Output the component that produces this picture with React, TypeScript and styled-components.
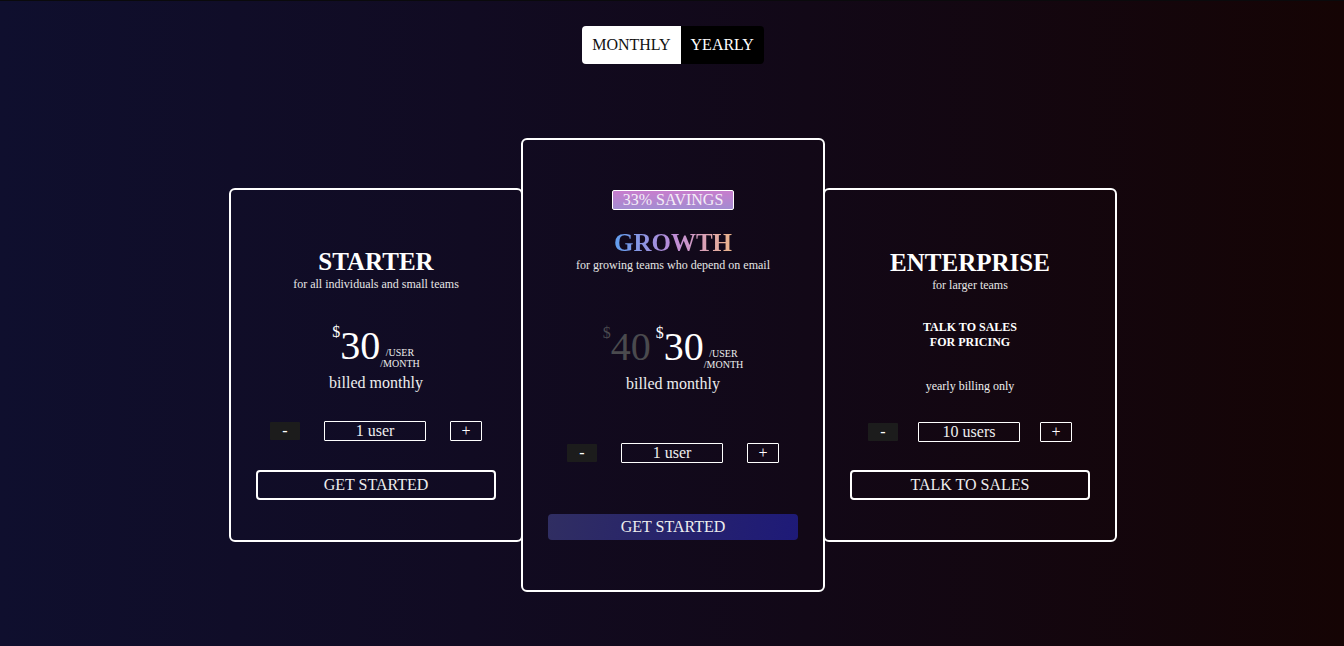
import React, { useState } from "react";
import styled, { createGlobalStyle } from "styled-components";

type Billing = "monthly" | "yearly";

const GlobalStyle = createGlobalStyle`
  html, body {
    margin: 0;
    padding: 0;
    height: 100%;
  }
  body {
    font-family: "Liberation Serif", "Times New Roman", serif;
    color: #fff;
    background: #0c0c1c;
  }
  #root {
    min-height: 100%;
  }
`;

export default function App() {
  const [billing, setBilling] = useState<Billing>("monthly");
  const [starterUsers, setStarterUsers] = useState(1);
  const [growthUsers, setGrowthUsers] = useState(1);
  const [entUsers, setEntUsers] = useState(10);

  const label = (n: number) => `${n} ${n === 1 ? "user" : "users"}`;

  return (
    <Page>
      <GlobalStyle />
      <Toggle>
        <ToggleBtn $active={billing === "monthly"} $side="left" onClick={() => setBilling("monthly")}>
          MONTHLY
        </ToggleBtn>
        <ToggleBtn $active={billing === "yearly"} $side="right" onClick={() => setBilling("yearly")}>
          YEARLY
        </ToggleBtn>
      </Toggle>

      <Cards>
        {/* starter */}
        <Card $pt={57} $pb={40}>
          <Title>STARTER</Title>
          <Sub>for all individuals and small teams</Sub>
          <PriceRow $mt={32}>
            <Dollar>$</Dollar>
            <Amount>30</Amount>
            <Per>
              <span>/USER</span>
              <span>/MONTH</span>
            </Per>
          </PriceRow>
          <Billed>billed monthly</Billed>
          <Qty $mt={29} $gap={24}>
            <Minus onClick={() => setStarterUsers((n) => Math.max(1, n - 1))}>-</Minus>
            <QtyBox>{label(starterUsers)}</QtyBox>
            <Plus onClick={() => setStarterUsers((n) => n + 1)}>+</Plus>
          </Qty>
          <Outline $mt={29}>GET STARTED</Outline>
        </Card>

        {/* growth */}
        <Card $featured $pt={50} $pb={50}>
          <Badge>33% SAVINGS</Badge>
          <GradTitle>GROWTH</GradTitle>
          <Sub>for growing teams who depend on email</Sub>
          <PriceRow $mt={52}>
            <Dollar $muted>$</Dollar>
            <Amount $muted>40</Amount>
            <Dollar>$</Dollar>
            <Amount>30</Amount>
            <Per>
              <span>/USER</span>
              <span>/MONTH</span>
            </Per>
          </PriceRow>
          <Billed>billed monthly</Billed>
          <Qty $mt={50} $gap={24}>
            <Minus onClick={() => setGrowthUsers((n) => Math.max(1, n - 1))}>-</Minus>
            <QtyBox>{label(growthUsers)}</QtyBox>
            <Plus onClick={() => setGrowthUsers((n) => n + 1)}>+</Plus>
          </Qty>
          <Filled>GET STARTED</Filled>
        </Card>

        {/* enterprise */}
        <Card $pt={58} $pb={40}>
          <Title>ENTERPRISE</Title>
          <Sub>for larger teams</Sub>
          <SalesNote>
            TALK TO SALES
            <br />
            FOR PRICING
          </SalesNote>
          <Small>yearly billing only</Small>
          <Qty $mt={29} $gap={20}>
            <Minus onClick={() => setEntUsers((n) => Math.max(10, n - 1))}>-</Minus>
            <QtyBox>{label(entUsers)}</QtyBox>
            <Plus onClick={() => setEntUsers((n) => n + 1)}>+</Plus>
          </Qty>
          <Outline $mt={28}>TALK TO SALES</Outline>
        </Card>
      </Cards>
    </Page>
  );
}

const Page = styled.div`
  min-height: 646px;
  box-sizing: border-box;
  border-top: 1px solid #0a0a0c;
  background: linear-gradient(to right, #0f0f2e 0%, #110b22 35%, #120817 60%, #150404 100%);
  display: flex;
  flex-direction: column;
  align-items: center;
  padding-top: 25px;
`;

const Toggle = styled.div`
  display: flex;
  height: 38px;
  padding-left: 2px;
`;

const ToggleBtn = styled.button<{ $active: boolean; $side: "left" | "right" }>`
  font-family: inherit;
  font-size: 16px;
  border: none;
  padding: 0 10px;
  cursor: pointer;
  background: ${(p) => (p.$active ? "#fff" : "#000")};
  color: ${(p) => (p.$active ? "#111" : "#fff")};
  border-radius: ${(p) => (p.$side === "left" ? "4px 0 0 4px" : "0 4px 4px 0")};
`;

const Cards = styled.div`
  margin-top: 74px;
  padding-left: 2px;
  display: flex;
  align-items: center;
`;

const Card = styled.div<{ $featured?: boolean; $pt: number; $pb: number }>`
  box-sizing: border-box;
  width: ${(p) => (p.$featured ? 304 : 294)}px;
  margin: 0 -1px;
  border: 2px solid #fff;
  border-radius: 6px;
  padding: ${(p) => p.$pt}px 0 ${(p) => p.$pb}px;
  display: flex;
  flex-direction: column;
  align-items: center;
  position: relative;
  z-index: ${(p) => (p.$featured ? 1 : 0)};
`;

const Title = styled.div`
  font-size: 25px;
  font-weight: 700;
  line-height: 30px;
`;

const GradTitle = styled(Title)`
  margin-top: 18px;
  background: linear-gradient(90deg, #5f9ef0 0%, #8e95e2 25%, #bd8bd8 50%, #d9a0b9 75%, #ebb48a 100%);
  -webkit-background-clip: text;
  background-clip: text;
  color: transparent;
`;

const Sub = styled.div`
  font-size: 12px;
  line-height: 14px;
  color: #e6e6e6;
`;

const Badge = styled.div`
  box-sizing: border-box;
  height: 20px;
  width: 122px;
  border: 1px solid #fff;
  border-radius: 2px;
  background: linear-gradient(#c77dcd, #a38cd1);
  font-size: 16px;
  line-height: 18px;
  text-align: center;
  color: #f4eef8;
`;

const PriceRow = styled.div<{ $mt: number }>`
  margin-top: ${(p) => p.$mt}px;
  height: 46px;
  display: flex;
  align-items: flex-start;
`;

const Dollar = styled.span<{ $muted?: boolean }>`
  font-size: 16px;
  line-height: 16px;
  margin-top: 1px;
  color: ${(p) => (p.$muted ? "#4a4a4e" : "#fff")};
`;

const Amount = styled.span<{ $muted?: boolean }>`
  font-size: 40px;
  line-height: 46px;
  margin-right: ${(p) => (p.$muted ? 5 : 0)}px;
  color: ${(p) => (p.$muted ? "#4a4a4e" : "#fff")};
`;

const Per = styled.span`
  display: flex;
  flex-direction: column;
  align-items: center;
  font-size: 10px;
  line-height: 11px;
  margin-top: 24px;
  color: #eee;
`;

const Billed = styled.div`
  margin-top: 5px;
  font-size: 16px;
  line-height: 18px;
  color: #eee;
`;

const SalesNote = styled.div`
  margin-top: 28px;
  font-size: 12px;
  line-height: 15px;
  font-weight: 700;
  text-align: center;
`;

const Small = styled.div`
  margin-top: 29px;
  font-size: 12px;
  line-height: 14px;
  color: #eee;
`;

const Qty = styled.div<{ $mt: number; $gap: number }>`
  margin-top: ${(p) => p.$mt}px;
  display: flex;
  align-items: center;
  gap: ${(p) => p.$gap}px;
  height: 20px;
`;

const Minus = styled.button`
  width: 30px;
  height: 18px;
  border: none;
  border-radius: 1px;
  background: #1c1c1c;
  color: #fff;
  font-family: inherit;
  font-size: 16px;
  line-height: 18px;
  padding: 0;
  cursor: pointer;
`;

const QtyBox = styled.div`
  box-sizing: border-box;
  width: 102px;
  height: 20px;
  border: 1px solid #fff;
  border-radius: 1px;
  font-size: 16px;
  line-height: 18px;
  text-align: center;
  color: #eee;
`;

const Plus = styled.button`
  box-sizing: border-box;
  width: 32px;
  height: 20px;
  border: 1px solid #fff;
  border-radius: 1px;
  background: transparent;
  color: #fff;
  font-family: inherit;
  font-size: 16px;
  line-height: 18px;
  padding: 0;
  cursor: pointer;
`;

const Outline = styled.button<{ $mt: number }>`
  margin-top: ${(p) => p.$mt}px;
  box-sizing: border-box;
  width: 240px;
  height: 30px;
  border: 2px solid #fff;
  border-radius: 4px;
  background: transparent;
  color: #eee;
  font-family: inherit;
  font-size: 16px;
  padding: 0;
  cursor: pointer;
`;

const Filled = styled.button`
  margin-top: 51px;
  width: 250px;
  height: 26px;
  border: none;
  border-radius: 4px;
  background: linear-gradient(100deg, #302e62 0%, #27236c 50%, #1e1a78 100%);
  color: #eee;
  font-family: inherit;
  font-size: 16px;
  padding: 0;
  cursor: pointer;
`;
